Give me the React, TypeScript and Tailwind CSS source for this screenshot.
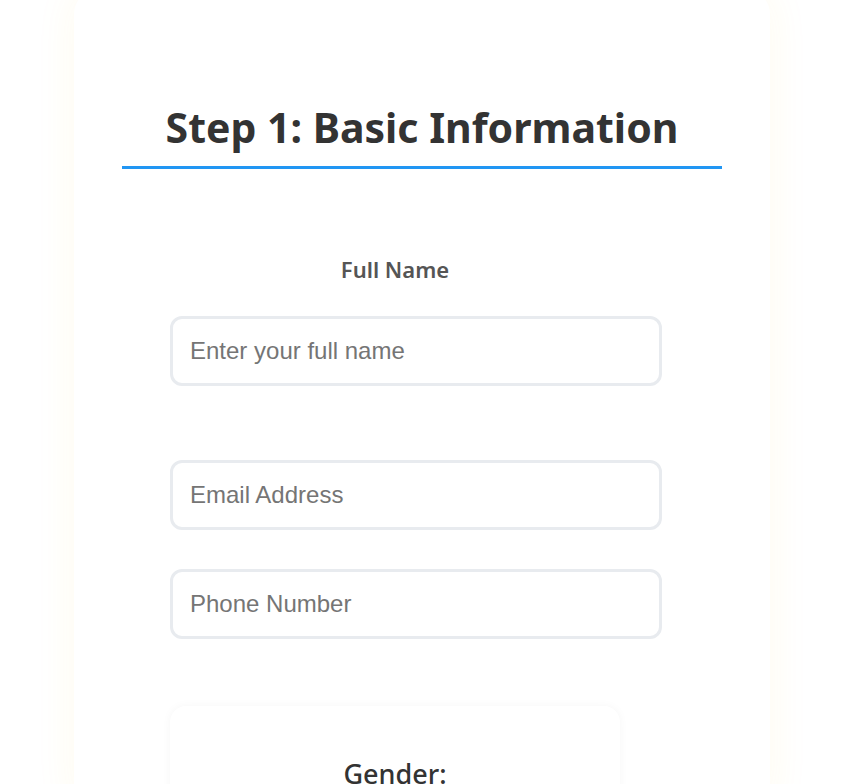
import React from "react";

const Field = ({ placeholder, type = "text" }: { placeholder: string; type?: string }) => (
    <input
        type={type}
        placeholder={placeholder}
        className="block w-[492px] rounded-xl border-[3px] border-[#e8ebef] bg-white px-[17px] py-[19px] text-[24px] leading-[26px] text-[#333] placeholder:text-[#757575] outline-none"
        style={{ fontFamily: '"Liberation Sans", Arial, sans-serif' }}
    />
);

export default function App() {
    return (
        <div className="min-h-screen w-full bg-white overflow-hidden" style={{ fontFamily: '"Noto Sans", sans-serif' }}>
            <div className="ml-[74px] -mt-[10px] w-[696px] h-[820px] rounded-[24px] bg-white px-12 pt-[113px] shadow-[0_0_40px_rgba(255,200,40,0.08)]">

                {/* Step heading */}
                <h2 className="border-b-[3px] border-[#2196F3] pb-[14px] text-center text-[41px] font-bold leading-[1.2] text-[#333]">
                    Step 1: Basic Information
                </h2>

                {/* Form */}
                <div className="ml-12 w-[450px] pt-[84px]">
                    <div className="mb-[74px]">
                        <label className="mb-[30px] block text-center text-[22px] font-semibold text-[#555]">
                            Full Name
                        </label>
                        <Field placeholder="Enter your full name" />
                    </div>

                    <div className="space-y-[39px]">
                        <Field type="email" placeholder="Email Address" />
                        <Field type="tel" placeholder="Phone Number" />
                    </div>

                    {/* Gender */}
                    <div className="mt-[67px] rounded-2xl bg-white px-6 pt-[50px] pb-6 shadow-[0_0_10px_rgba(0,0,0,0.04)]">
                        <p className="text-center text-[27px] font-medium leading-[1.3] text-[#333]">Gender:</p>
                    </div>
                </div>
            </div>
        </div>
    );
}
